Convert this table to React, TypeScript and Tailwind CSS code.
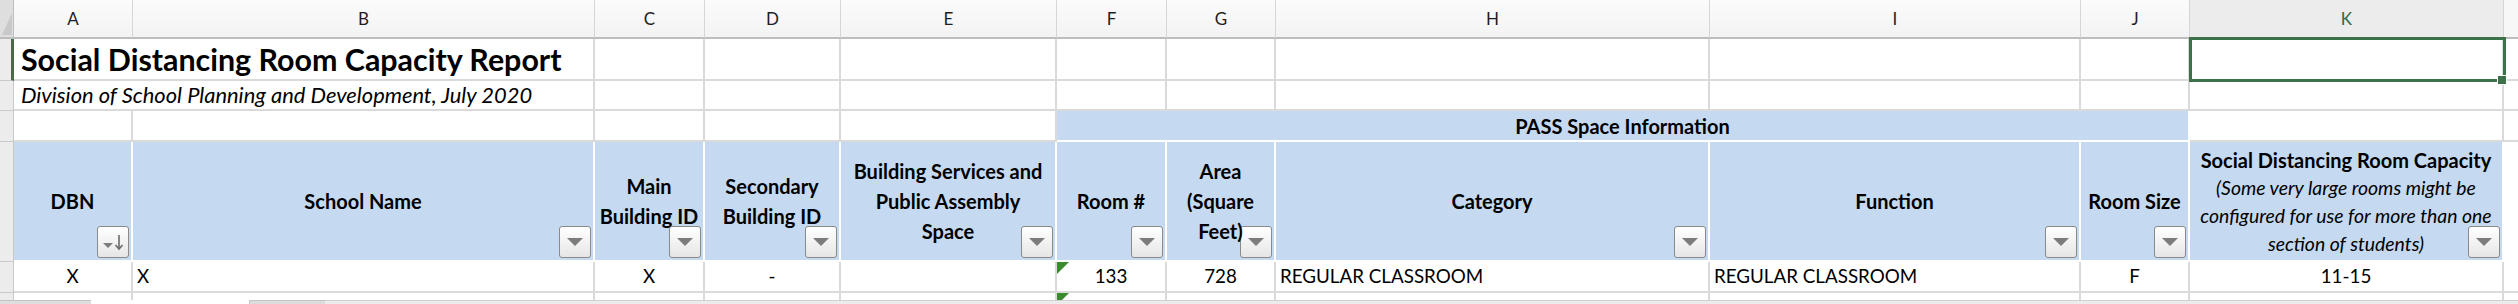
import React from "react";

const COLS =
  "grid grid-cols-[14px_119px_462px_110px_136px_216px_110px_109px_434px_371px_109px_314px_14px] grid-rows-[39px_42px_30px_31px_120px_31px_7px]";

const GRID = "border-r-2 border-b-2 border-[#dadada] bg-white";
const GUT = "border-r border-b border-[#c9c9c9] bg-[#ececec]";
const BLUE =
  "relative border-r-2 border-b-2 border-white bg-[#c5d9f1] flex items-center justify-center text-center font-bold text-[20px] leading-[30px] text-black";
const DATA = "text-[18.8px]";

function Tri() {
  return (
    <svg width="16" height="8" viewBox="0 0 16 8">
      <polygon points="0,0 16,0 8,8" fill="#7c7c7c" />
    </svg>
  );
}

function FilterBtn({ sort = false }: { sort?: boolean }) {
  return (
    <div className="absolute right-[2px] bottom-[2px] flex h-[32px] w-[32px] items-center justify-center rounded-[3px] border-[1.5px] border-[#8a8a8a] bg-linear-to-b from-white to-[#e6e6e6]">
      {sort ? (
        <svg width="26" height="22" viewBox="0 0 26 22">
          <polygon points="3,12 13,12 8,17" fill="#7c7c7c" />
          <line x1="19" y1="4" x2="19" y2="18" stroke="#6a6a6a" strokeWidth="1.6" />
          <polyline points="15.5,14 19,18 22.5,14" fill="none" stroke="#6a6a6a" strokeWidth="1.6" />
        </svg>
      ) : (
        <Tri />
      )}
    </div>
  );
}

function GreenTri() {
  return (
    <svg className="absolute left-0 top-0" width="12" height="12" viewBox="0 0 12 12">
      <polygon points="0,0 12,0 0,12" fill="#3a8a2e" />
    </svg>
  );
}

function E({ n = 1, cls = GRID }: { n?: number; cls?: string }) {
  return (
    <>
      {Array.from({ length: n }).map((_, i) => (
        <div key={i} className={cls} />
      ))}
    </>
  );
}

export default function App() {
  const letters = ["A", "B", "C", "D", "E", "F", "G", "H", "I", "J"];
  return (
    <div className="w-[2518px] h-[304px] overflow-hidden bg-white font-['Lato',sans-serif] text-black">
      <div className={COLS}>
        {/* column header row */}
        <div className="relative border-r border-b-2 border-[#bdbdbd] bg-[#dedede]">
          <svg className="absolute right-[1px] bottom-[2px]" width="10" height="22" viewBox="0 0 10 22">
            <polygon points="10,0 10,22 0,22" fill="#c9c9c9" />
          </svg>
        </div>
        {letters.map((l) => (
          <div
            key={l}
            className="flex items-center justify-center border-r border-b-2 border-r-[#d6d6d6] border-b-[#bdbdbd] bg-linear-to-b from-[#fbfbfb] to-[#f3f3f3] text-[17px] text-[#1e1e1e]"
          >
            {l}
          </div>
        ))}
        <div className="flex items-center justify-center border-r border-b-2 border-r-[#d6d6d6] border-b-[#3c7149] bg-[#ececec] text-[17px] text-[#2f6b45]">
          K
        </div>
        <div className="border-b-2 border-[#bdbdbd] bg-[#f7f7f7]" />

        {/* row 1 */}
        <div className="border-r-[3px] border-b border-r-[#3c7149] border-b-[#c9c9c9] bg-[#ececec]" />
        <div className={`${GRID} col-span-2 flex items-center pl-[7px] pt-[1px] text-[30.4px] font-bold whitespace-nowrap`}>
          Social Distancing Room Capacity Report
        </div>
        <E n={8} />
        <div className={`${GRID} relative`}>
          <div className="absolute left-[-1px] top-[-2px] z-10 h-[45px] w-[317px] border-[3px] border-[#3c7149]" />
          <div className="absolute left-[307px] top-[36px] z-20 h-[10px] w-[10px] border border-white bg-[#3c7149]" />
        </div>
        <div className="border-b-2 border-[#dadada] bg-white" />

        {/* row 2 */}
        <div className={GUT} />
        <div className={`${GRID} col-span-2 flex items-center pl-[7px] text-[21.9px] italic whitespace-nowrap`}>
          Division of School Planning and Development, July 2020
        </div>
        <E n={9} />
        <div className="border-b-2 border-[#dadada] bg-white" />

        {/* row 3 */}
        <div className={GUT} />
        <E n={5} />
        <div className={`${BLUE} col-span-5`}>PASS Space Information</div>
        <div className={GRID} />
        <div className="border-b-2 border-[#dadada] bg-white" />

        {/* row 4 headers */}
        <div className={GUT} />
        <div className={BLUE}>
          DBN
          <FilterBtn sort />
        </div>
        <div className={BLUE}>
          School Name
          <FilterBtn />
        </div>
        <div className={BLUE}>
          <div className="whitespace-nowrap">
            Main
            <br />
            Building ID
          </div>
          <FilterBtn />
        </div>
        <div className={BLUE}>
          <div className="whitespace-nowrap">
            Secondary
            <br />
            Building ID
          </div>
          <FilterBtn />
        </div>
        <div className={BLUE}>
          <div className="whitespace-nowrap">
            Building Services and
            <br />
            Public Assembly
            <br />
            Space
          </div>
          <FilterBtn />
        </div>
        <div className={BLUE}>
          Room #
          <FilterBtn />
        </div>
        <div className={BLUE}>
          <div className="relative z-10 whitespace-nowrap">
            Area
            <br />
            (Square
            <br />
            Feet)
          </div>
          <FilterBtn />
        </div>
        <div className={BLUE}>
          Category
          <FilterBtn />
        </div>
        <div className={BLUE}>
          Function
          <FilterBtn />
        </div>
        <div className={BLUE}>
          <span className="whitespace-nowrap">Room Size</span>
          <FilterBtn />
        </div>
        <div className={BLUE}>
          <div className="whitespace-nowrap pt-[2px]">
            <div className="leading-[28px]">Social Distancing Room Capacity</div>
            <div className="text-[19.4px] font-normal italic leading-[28px]">
              (Some very large rooms might be
              <br />
              configured for use for more than one
              <br />
              section of students)
            </div>
          </div>
          <FilterBtn />
        </div>
        <div className="border-b-2 border-white bg-white" />

        {/* row 5 data */}
        <div className={GUT} />
        <div className={`${GRID} ${DATA} flex items-center justify-center`}>X</div>
        <div className={`${GRID} ${DATA} flex items-center pl-[4px]`}>X</div>
        <div className={`${GRID} ${DATA} flex items-center justify-center`}>X</div>
        <div className={`${GRID} ${DATA} flex items-center justify-center`}>-</div>
        <div className={GRID} />
        <div className={`${GRID} ${DATA} relative flex items-center justify-center`}>
          <GreenTri />
          133
        </div>
        <div className={`${GRID} ${DATA} flex items-center justify-center`}>728</div>
        <div className={`${GRID} ${DATA} flex items-center pl-[4px]`}>REGULAR CLASSROOM</div>
        <div className={`${GRID} ${DATA} flex items-center pl-[4px]`}>REGULAR CLASSROOM</div>
        <div className={`${GRID} ${DATA} flex items-center justify-center`}>F</div>
        <div className={`${GRID} ${DATA} flex items-center justify-center`}>11-15</div>
        <div className="border-b-2 border-[#dadada] bg-white" />

        {/* row 6 partial */}
        <div className="border-r border-[#c9c9c9] bg-[#ececec]" />
        <div className="border-r-2 border-[#dadada] bg-white" />
        <div className="border-r-2 border-[#dadada] bg-white" />
        <div className="border-r-2 border-[#dadada] bg-white" />
        <div className="border-r-2 border-[#dadada] bg-white" />
        <div className="border-r-2 border-[#dadada] bg-white" />
        <div className="relative overflow-hidden border-r-2 border-[#dadada] bg-white">
          <GreenTri />
        </div>
        <div className="border-r-2 border-[#dadada] bg-white" />
        <div className="border-r-2 border-[#dadada] bg-white" />
        <div className="border-r-2 border-[#dadada] bg-white" />
        <div className="border-r-2 border-[#dadada] bg-white" />
        <div className="border-r-2 border-[#dadada] bg-white" />
        <div className="bg-white" />
      </div>

      {/* sheet tab strip */}
      <div className="flex h-[4px]">
        <div className="w-[91px] border-t border-[#c4c4c4] bg-[#dedede]" />
        <div className="w-[158px] bg-white" />
        <div className="w-[76px] border-t border-l border-[#c4c4c4] bg-[#dcdcdc]" />
        <div className="flex-1 border-t border-[#cfcfcf] bg-[#ececec]" />
      </div>
    </div>
  );
}
